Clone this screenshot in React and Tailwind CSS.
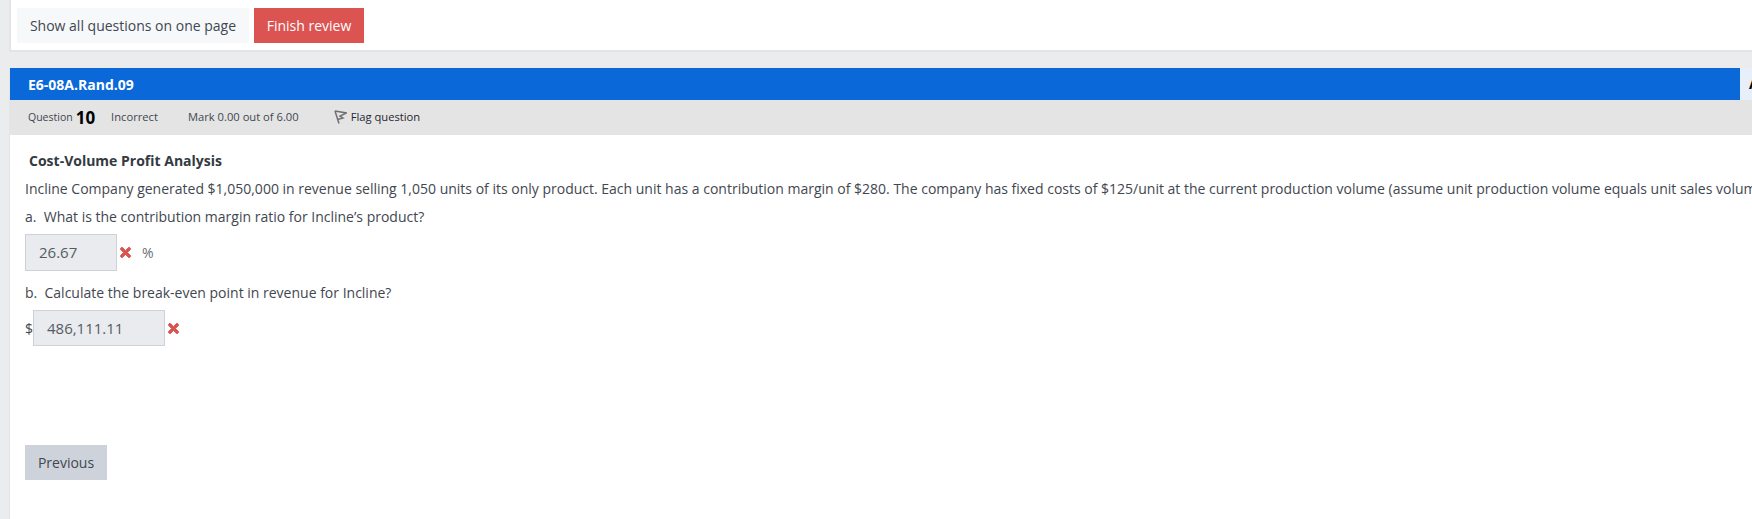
import { FaTimes } from 'react-icons/fa'

function WrongMark() {
  return <FaTimes size={15} className="shrink-0 stroke-[30] text-[#d9534f]" />
}

function FlagIcon() {
  return (
    <svg width="13" height="14" viewBox="0 0 13 14" fill="none" stroke="#707070" strokeWidth="1.5">
      <path d="M1 1 L5 13.5" />
      <path d="M1 1 L12.5 3 L6 6 L9 8 L3.5 9.5" />
    </svg>
  )
}

export default function App() {
  return (
    <div className="h-[519px] w-[1752px] overflow-hidden bg-[#ebecee] pl-[9px] font-['Open_Sans',sans-serif] text-[#3f4750]">
      {/* Top buttons */}
      <div className="flex h-[52px] gap-[5px] border-b-2 border-l-2 border-[#e3e4e6] bg-white pl-[6px] pt-[8px]">
        <button className="h-[35px] w-[232px] bg-[#f6f8fa] text-[14px] text-[#3f4750]">
          Show all questions on one page
        </button>
        <button className="h-[35px] w-[110px] bg-[#db5451] text-[14px] text-white">
          Finish review
        </button>
      </div>

      {/* Question */}
      <div className="mt-[16px] h-[451px] border-l border-[#e3e4e6] bg-white">
        <div className="flex">
          <div className="flex h-[32px] flex-1 items-center bg-[#0b68d9] pl-[18px] text-[14px] font-bold text-white">
            E6-08A.Rand.09
          </div>
          <div className="h-[32px] w-[12px] overflow-hidden whitespace-nowrap bg-[#e6effa] pl-[9px] text-[14px] font-bold leading-[32px] text-black">
            A
          </div>
        </div>

        <div className="flex h-[35px] items-center bg-[#e4e4e4] pl-[18px] text-[11.2px] text-[#3f4750]">
          <span className="text-[10.5px]">Question</span>
          <span className="ml-[3px] text-[17px] font-bold leading-none text-black">10</span>
          <span className="ml-[16px]">Incorrect</span>
          <span className="ml-[30px]">Mark 0.00 out of 6.00</span>
          <span className="ml-[35px] flex items-center gap-[4px] text-[#1f2730]">
            <FlagIcon />
            Flag question
          </span>
        </div>

        <div className="pl-[15px] text-[14px]">
          <h3 className="ml-[4px] mt-[16px] text-[14px] font-bold leading-[19px] text-[#333a42]">
            Cost-Volume Profit Analysis
          </h3>
          <p className="mt-[9px] whitespace-nowrap leading-[19px]">
            Incline Company generated $1,050,000 in revenue selling 1,050 units of its only product. Each unit has a contribution margin of $280. The company has fixed costs of $125/unit at the current production volume (assume unit production volume equals unit sales volume).
          </p>
          <p className="mt-[9px] leading-[19px]">a.&nbsp; What is the contribution margin ratio for Incline’s product?</p>

          <div className="mt-[8px] flex items-center">
            <div className="flex h-[37px] w-[92px] items-center border border-[#cdd2d8] bg-[#e9ebee] pl-[13px] text-[15px] text-[#555c64]">
              26.67
            </div>
            <span className="ml-[1px]"><WrongMark /></span>
            <span className="ml-[9px] text-[14px] text-[#6b7178]">%</span>
          </div>

          <p className="mt-[12px] leading-[19px]">b.&nbsp; Calculate the break-even point in revenue for Incline?</p>

          <div className="mt-[8px] flex items-center">
            <span className="w-[8px] text-[14px]">$</span>
            <div className="flex h-[36px] w-[132px] items-center border border-[#cdd2d8] bg-[#e9ebee] pl-[13px] text-[15px] text-[#555c64]">
              486,111.11
            </div>
            <span className="ml-[1px]"><WrongMark /></span>
          </div>

          <button className="mt-[99px] block h-[35px] w-[82px] bg-[#ced3db] text-[14px] text-[#3f4750]">
            Previous
          </button>
        </div>
      </div>
    </div>
  )
}
